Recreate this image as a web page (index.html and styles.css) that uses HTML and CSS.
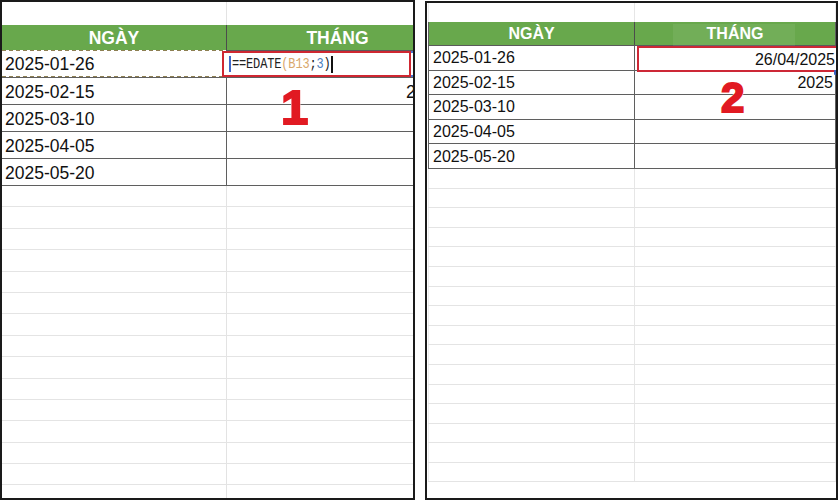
FILE: index.html
```
<!DOCTYPE html>
<html lang="vi">
<head>
<meta charset="utf-8">
<link rel="stylesheet" href="styles.css">
</head>
<body>
<div class="shot">
  <div class="panel left">
    <div class="sheet">
      <div class="row pad"><div class="c a"></div><div class="c b"></div></div>
      <div class="row head"><div class="c a">NGÀY</div><div class="c b">THÁNG</div></div>
      <div class="row data"><div class="c a marquee">2025-01-26</div><div class="c b sel"></div></div>
      <div class="row data"><div class="c a">2025-02-15</div><div class="c b num">2025</div></div>
      <div class="row data"><div class="c a">2025-03-10</div><div class="c b"></div></div>
      <div class="row data"><div class="c a">2025-04-05</div><div class="c b"></div></div>
      <div class="row data"><div class="c a">2025-05-20</div><div class="c b"></div></div>
      <div class="row empty"><div class="c a"></div><div class="c b"></div></div>
      <div class="row empty"><div class="c a"></div><div class="c b"></div></div>
      <div class="row empty"><div class="c a"></div><div class="c b"></div></div>
      <div class="row empty"><div class="c a"></div><div class="c b"></div></div>
      <div class="row empty"><div class="c a"></div><div class="c b"></div></div>
      <div class="row empty"><div class="c a"></div><div class="c b"></div></div>
      <div class="row empty"><div class="c a"></div><div class="c b"></div></div>
      <div class="row empty"><div class="c a"></div><div class="c b"></div></div>
      <div class="row empty"><div class="c a"></div><div class="c b"></div></div>
      <div class="row empty"><div class="c a"></div><div class="c b"></div></div>
      <div class="row empty"><div class="c a"></div><div class="c b"></div></div>
      <div class="row empty"><div class="c a"></div><div class="c b"></div></div>
      <div class="row empty"><div class="c a"></div><div class="c b"></div></div>
      <div class="row empty"><div class="c a"></div><div class="c b"></div></div>
      <div class="row empty"><div class="c a"></div><div class="c b"></div></div>
    </div>
    <div class="editor"><span class="caretbar"></span><span class="f">==EDATE<span class="ref">(B13</span>;<span class="arg">3</span>)</span><span class="cursor"></span></div>
    <div class="step step1">1</div>
  </div>

  <div class="panel right">
    <div class="sheet">
      <div class="row pad"><div class="c a"></div><div class="c b"></div></div>
      <div class="row head"><div class="c a">NGÀY</div><div class="c b">THÁNG</div></div>
      <div class="row data"><div class="c a">2025-01-26</div><div class="c b num"></div></div>
      <div class="row data"><div class="c a">2025-02-15</div><div class="c b num">2025</div></div>
      <div class="row data"><div class="c a">2025-03-10</div><div class="c b"></div></div>
      <div class="row data"><div class="c a">2025-04-05</div><div class="c b"></div></div>
      <div class="row data"><div class="c a">2025-05-20</div><div class="c b"></div></div>
      <div class="row empty"><div class="c a"></div><div class="c b"></div></div>
      <div class="row empty"><div class="c a"></div><div class="c b"></div></div>
      <div class="row empty"><div class="c a"></div><div class="c b"></div></div>
      <div class="row empty"><div class="c a"></div><div class="c b"></div></div>
      <div class="row empty"><div class="c a"></div><div class="c b"></div></div>
      <div class="row empty"><div class="c a"></div><div class="c b"></div></div>
      <div class="row empty"><div class="c a"></div><div class="c b"></div></div>
      <div class="row empty"><div class="c a"></div><div class="c b"></div></div>
      <div class="row empty"><div class="c a"></div><div class="c b"></div></div>
      <div class="row empty"><div class="c a"></div><div class="c b"></div></div>
      <div class="row empty"><div class="c a"></div><div class="c b"></div></div>
      <div class="row empty"><div class="c a"></div><div class="c b"></div></div>
      <div class="row empty"><div class="c a"></div><div class="c b"></div></div>
      <div class="row empty"><div class="c a"></div><div class="c b"></div></div>
      <div class="row empty"><div class="c a"></div><div class="c b"></div></div>
      <div class="row empty"><div class="c a"></div><div class="c b"></div></div>
    </div>
    <div class="watermark"></div>
    <div class="result">26/04/2025</div>
    <div class="handle"></div>
    <div class="step step2">2</div>
  </div>
</div>
</body>
</html>
```
FILE: styles.css
```
* { box-sizing: border-box; }
html, body { margin: 0; padding: 0; background: #fff; }
body { font-family: "Liberation Sans", Arial, sans-serif; color: #111; }

.shot {
  width: 840px;
  height: 500px;
  display: flex;
  gap: 10px;
  align-items: flex-start;
}

.panel {
  position: relative;
  overflow: hidden;
  border: 2px solid #1a1a1a;
  background: #fff;
}

.row { display: flex; }
.c { flex: none; display: flex; align-items: center; white-space: nowrap; overflow: hidden; }

/* ---------- left panel ---------- */
.left { width: 415px; height: 500px; }
.left .sheet { width: 446px; }
.left .c.a { width: 225px; border-right: 1px solid #e3e3e3; }
.left .c.b { width: 221px; }
.left .pad { height: 23px; }
.left .head { height: 26px; background: #68a84c; border-bottom: 1px solid #5a5a5a; }
.left .head .c { justify-content: center; color: #fff; font-weight: bold; font-size: 17.5px; padding-top: 1px; }
.left .head .c.a { border-right: 1px solid #4c4c4c; }
.left .data { height: 27px; border-bottom: 1px solid #5f5f5f; }
.left .data .c { font-size: 17.5px; padding-top: 2px; }
.left .data .c.a { padding-left: 3px; border-right: 1px solid #5f5f5f; }
.left .data .c.num { justify-content: flex-end; padding-right: 3px; }
.left .empty { height: 21.4px; border-bottom: 1px solid #e4e4e4; }
.left .marquee {
  background:
    repeating-linear-gradient(90deg, #8d7f52 0 4px, transparent 4px 7px) left top / 100% 1px no-repeat,
    repeating-linear-gradient(90deg, #8d7f52 0 4px, transparent 4px 7px) left bottom / 100% 1px no-repeat,
    #fff;
  height: 27px;
  margin-top: -1px;
}
.left .sel { box-shadow: inset 0 -2px 0 #4a74cf, inset 0 2px 0 #4a74cf; }

.editor {
  position: absolute;
  left: 220px;
  top: 49px;
  width: 189px;
  height: 26px;
  border: 2.5px solid #cf2731;
  background: #fff;
  display: flex;
  align-items: center;
  padding-left: 5px;
}
.caretbar { flex: none; width: 2px; height: 16px; background: #3f68c9; margin-right: 1px; }
.f {
  flex: none;
  font-family: "Liberation Mono", "DejaVu Sans Mono", monospace;
  font-size: 15px;
  letter-spacing: -0.2px;
  color: #222;
  padding-top: 1px;
  transform: scaleX(0.8);
  transform-origin: left center;
  width: 99px;
}
.ref { color: #d9a86c; }
.arg { color: #4d7fbf; }
.cursor { flex: none; width: 1.5px; height: 17px; background: #111; margin-left: 0; }

.step {
  position: absolute;
  font-family: "Liberation Sans", Arial, sans-serif;
  font-weight: bold;
  color: #e11a22;
  line-height: 1;
  text-shadow: 0 0 2px #fff, 1px 1px 0 #fff, -1px -1px 0 #fff, 1px -1px 0 #fff, -1px 1px 0 #fff;
}
.step1 { left: 279px; top: 81px; font-size: 49px; -webkit-text-stroke: 2px #e11a22; }

/* ---------- right panel ---------- */
.right { width: 413px; height: 499px; margin-top: 1px; padding-left: 1px; }
.right .sheet { width: 408px; }
.right .c.a { width: 207px; border-left: 1px solid #ececec; border-right: 1px solid #e6e6e6; }
.right .c.b { width: 201px; border-right: 1px solid #ececec; }
.right .pad { height: 19px; }
.right .head { height: 24px; background: #68a84c; border-bottom: 1px solid #5a5a5a; }
.right .head .c { justify-content: center; color: #fff; font-weight: bold; font-size: 16px; padding-top: 1px; }
.right .head .c.a { border-left: 1px solid #5f5f5f; border-right: 1px solid #4c4c4c; }
.right .head .c.b { border-right: 1px solid #5f5f5f; }
.right .data { height: 24.6px; border-bottom: 1px solid #5f5f5f; }
.right .data .c { font-size: 16px; padding-top: 1px; }
.right .data .c.a { padding-left: 4px; border-left: 1px solid #5f5f5f; border-right: 1px solid #5f5f5f; }
.right .data .c.b { border-right: 1px solid #5f5f5f; }
.right .data .c.num { justify-content: flex-end; padding-right: 2px; }
.right .empty { height: 19.6px; border-bottom: 1px solid #e4e4e4; }

.watermark {
  position: absolute;
  left: 246px;
  top: 21px;
  width: 122px;
  height: 26px;
  background: rgba(255, 255, 255, 0.07);
}
.result {
  position: absolute;
  left: 210px;
  top: 43px;
  width: 201px;
  height: 26px;
  border: 2.5px solid #cd2836;
  background: #fff;
  font-size: 16px;
  display: flex;
  align-items: center;
  justify-content: flex-end;
  padding-right: 1px;
  padding-top: 1px;
}
.handle {
  position: absolute;
  left: 407px;
  top: 67px;
  width: 5px;
  height: 5px;
  border-radius: 1px;
  background: #3a5fc0;
}
.step2 { left: 294px; top: 74px; font-size: 42px; -webkit-text-stroke: 2px #e11a22; }
```
